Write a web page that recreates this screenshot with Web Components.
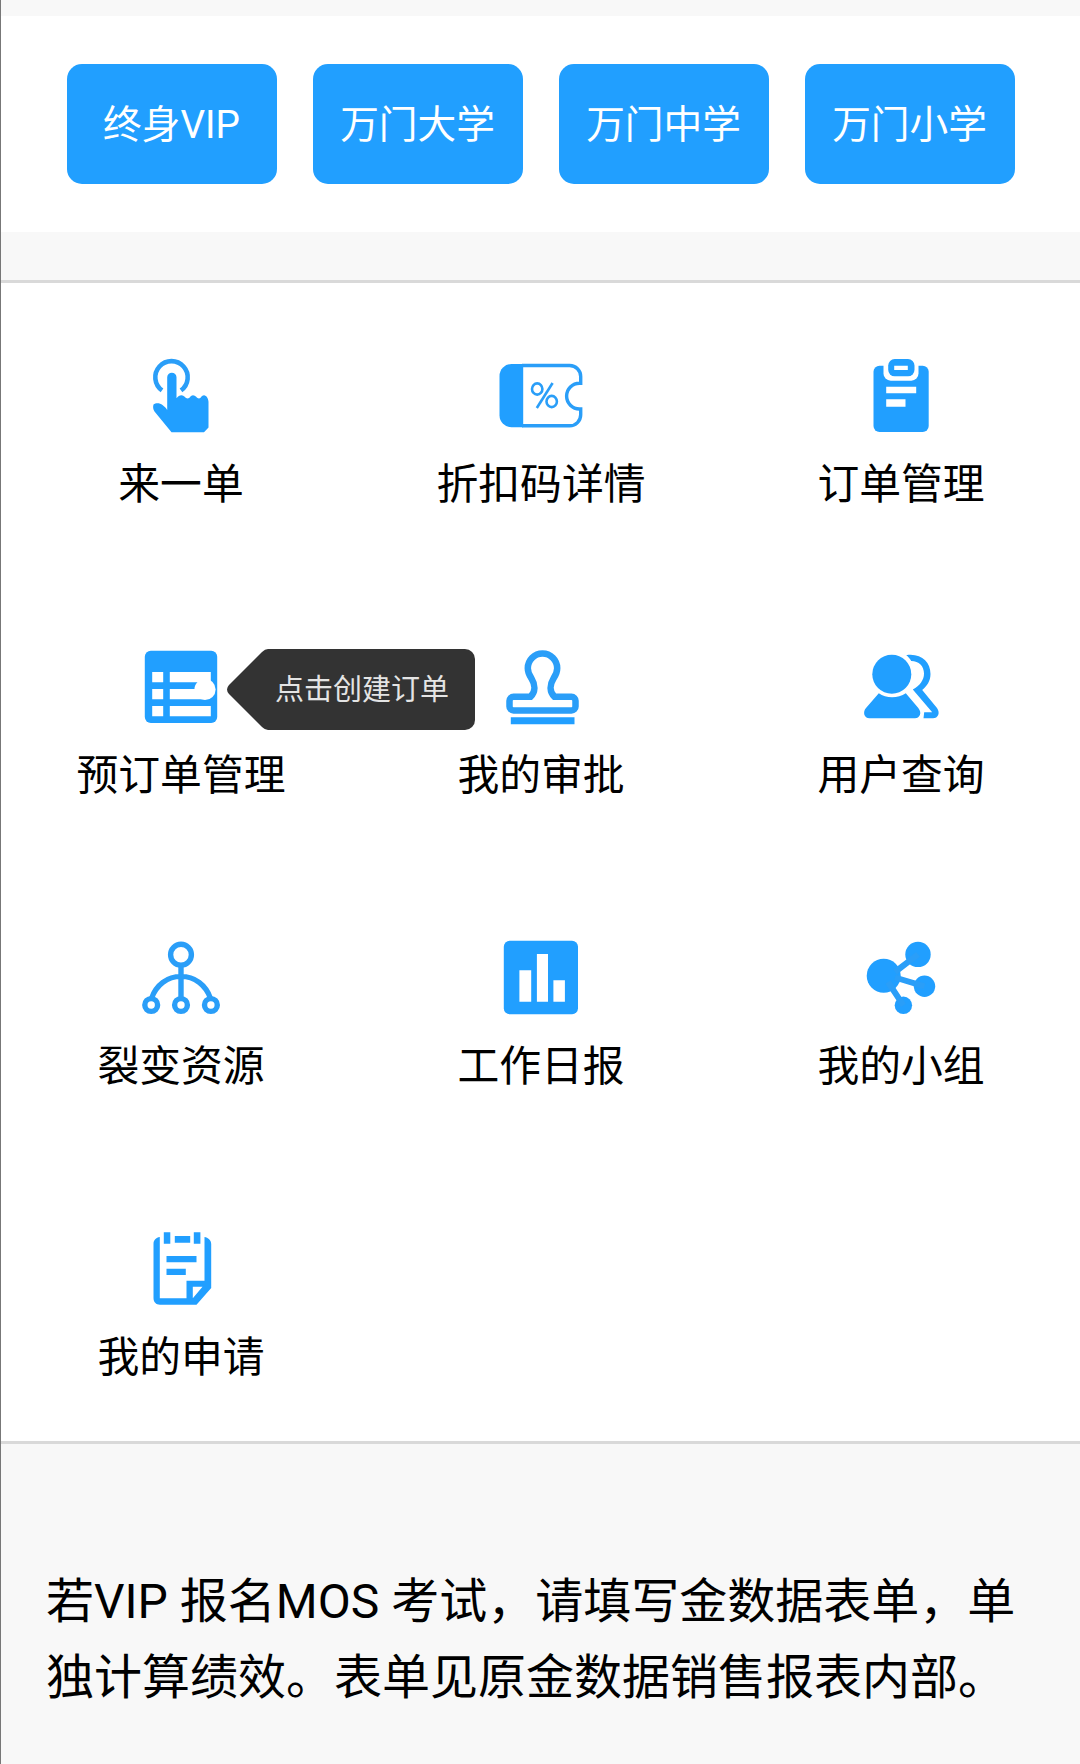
<!DOCTYPE html>
<html lang="zh-CN">
<head>
<meta charset="utf-8">
<title>工作台</title>
<style>
  body {
    margin: 0;
    background: #f8f8f8;
    font-family: Roboto, "Noto Sans CJK SC", sans-serif;
    color: #000;
  }
</style>
</head>
<body>
<work-page>
  <vip-bar slot="top">
    <vip-button>终身VIP</vip-button>
    <vip-button>万门大学</vip-button>
    <vip-button>万门中学</vip-button>
    <vip-button>万门小学</vip-button>
  </vip-bar>
  <menu-grid>
    <menu-item icon="tap">来一单</menu-item>
    <menu-item icon="coupon">折扣码详情</menu-item>
    <menu-item icon="clipboard">订单管理</menu-item>
    <menu-item icon="list">预订单管理<tip-bubble slot="tip">点击创建订单</tip-bubble></menu-item>
    <menu-item icon="stamp">我的审批</menu-item>
    <menu-item icon="users">用户查询</menu-item>
    <menu-item icon="tree">裂变资源</menu-item>
    <menu-item icon="chart">工作日报</menu-item>
    <menu-item icon="share">我的小组</menu-item>
    <menu-item icon="note">我的申请</menu-item>
  </menu-grid>
  <page-note>若VIP 报名MOS 考试，请填写金数据表单，单独计算绩效。表单见原金数据销售报表内部。</page-note>
</work-page>

<script>
const icons = {
  tap: `
    <path class="line" stroke-width="4.6" d="M31 45.400A16.200 16.200 0 1 1 50 45.400"/>
    <path d="M36.200 65V32.300a4.650 4.650 0 0 1 9.300 0V53.200C47 51.500 48.500 50.300 50.500 50.300C53 50.300 54.500 53.500 56.600 53.500C59 53.500 59.500 50.300 62 50.300C64.500 50.300 66 53.500 68 53.500C70 53.500 70.500 50.300 73 50.300C75.500 50.300 77.500 54 77.500 57V82.500L73 87.300H40.500L23.500 66.500C22 64.500 21.800 61.500 22.500 59.500C25 57.500 29 58 31.500 60C33.500 61.500 35 63 36.200 65Z"/>`,
  coupon: `
    <path d="M32.200 19H20.500A12 12 0 0 0 8.500 31V70.300A12 12 0 0 0 20.500 82.300H32.200Z"/>
    <path class="line" stroke-width="3.400" d="M31 20.500H78.700A11 11 0 0 1 89.700 31.500V38.200H88.500A12.800 12.800 0 0 0 88.500 64H89.700V69.800A11 11 0 0 1 78.700 80.800H31"/>
    <g class="line" stroke-width="2.600"><ellipse cx="46.200" cy="44" rx="5.200" ry="5.600"/><ellipse cx="60.700" cy="56.500" rx="5.200" ry="5.600"/><path d="M61.600 38L45.800 63"/></g>`,
  clipboard: `
    <rect x="22.500" y="20.700" width="55.200" height="66.300" rx="6"/>
    <path class="white" d="M32.500 19V28.500A7.200 7.200 0 0 0 39.700 35.700H60.300A7.200 7.200 0 0 0 67.500 28.500V19Z"/>
    <rect x="37.200" y="14" width="26.300" height="17.300" rx="6.500"/>
    <path class="white" d="M43.200 20.700h13.600V25H43.200ZM35.200 41.700h30v6.600h-30ZM35.200 54.300h19.300v7.400H35.200Z"/>`,
  list: `
    <rect x="13.800" y="14.700" width="72.400" height="72.300" rx="6"/>
    <path class="white" d="M21.200 36h11v10.300h-11ZM38.800 36h41v10.300h-41ZM21.200 53h11v10.300h-11ZM38.800 53h35v10.300h-35ZM21.200 70h11v10.300h-11ZM38.800 70h41v10.300h-41Z"/>
    <circle class="white" cx="74" cy="53.500" r="10.600"/>`,
  stamp: `
    <path class="line" stroke-width="6.500" d="M22.500 60.800H39.500C44.500 56 44.500 49 40.500 42.500C38 39 36.800 36 36.800 32.300A14.700 14.700 0 0 1 66.200 32.300C66.200 36 65 39 62.500 42.500C58.500 49 58.500 56 63.500 60.800H80.500A4 4 0 0 1 84.500 64.800V70.400A4 4 0 0 1 80.500 74.400H22.500A4 4 0 0 1 18.500 70.400V64.800A4 4 0 0 1 22.500 60.800Z"/>
    <path d="M19.800 81.300H83.500V88.300H19.800Z"/>`,
  users: `
    <circle cx="40.800" cy="38.300" r="19.500"/>
    <path d="M27.800 57.300C35 62.500 47 62.500 54.800 57.300L67.300 72C71.500 77 68.500 82.300 64 82.300H18.500C13 82.300 11.500 76 15 72Z"/>
    <path d="M55.200 19.200C70 17 79.500 26 79.500 38C79.500 45 76 50 71.200 54L86 72C89.500 77 87 82.300 82 82.300H72.500L73.200 76.300H81.200L61.800 53.500C69 49.500 73 44 73 37.500C73 30 68 25 60.200 24.900C59 22.500 57 20.500 55.200 19.200Z"/>`,
  tree: `
    <g class="line" stroke-width="5.400">
      <circle cx="50" cy="27.700" r="10.400"/>
      <circle cx="20.200" cy="78" r="6.400"/><circle cx="50" cy="78" r="6.400"/><circle cx="79.900" cy="78" r="6.400"/>
      <path d="M50 39V71M20.500 71.500C25 58 36.500 49.400 50 49.400S75 58 79.500 71.500"/>
    </g>`,
  chart: `
    <rect x="12.800" y="13.700" width="74.200" height="73.600" rx="6"/>
    <path class="white" d="M28.400 43.300h11.800v31.400H28.400ZM45.900 27H57v47.700H45.900ZM62.400 53.300h11.500v21.400H62.400Z"/>`,
  share: `
    <circle cx="32.700" cy="48.700" r="17"/><circle cx="67" cy="27.400" r="12.700"/>
    <circle cx="73.500" cy="59.300" r="10.700"/><circle cx="52.400" cy="78.300" r="8.700"/>
    <path class="line" stroke-width="6" d="M67 27.400L44 45M73.500 59.300L44 50.500M52.400 78.300L37 55"/>`,
  note: `
    <path fill-rule="evenodd" d="M28.800 19V80.300H55.500V62.700H73.500V19C77 19.500 80.200 22 80.200 26V70L65.500 86.700H29C25 86.700 22.500 84 22.500 80V26C22.500 22 25 19.500 28.800 19ZM61.800 68.700V80.300L71.500 68.700Z"/>
    <path d="M32.800 14.300h6.500v11.400h-6.500ZM62.800 14.300h6.600v11.400h-6.600ZM43.800 18h15.400v6.700H43.800ZM35.500 38h30v6.300h-30ZM35.500 50.700h19.300V57H35.500Z"/>`
};

class WorkPage extends HTMLElement {
  constructor() {
    super();
    this.attachShadow({mode: 'open'}).innerHTML = `
      <style>
        :host {
          display: flex;
          flex-direction: column;
          box-sizing: border-box;
          min-height: 1764px;
          padding-top: 16px;
          border-left: 1px solid #777;
        }
      </style>
      <slot name="top"></slot>
      <slot></slot>
    `;
  }
}

class VipBar extends HTMLElement {
  constructor() {
    super();
    this.attachShadow({mode: 'open'}).innerHTML = `
      <style>
        :host {
          display: grid;
          grid-template-columns: repeat(4, 210px);
          gap: 36px;
          padding: 48px 65.500px;
          background: #fff;
          margin-bottom: 48px;
        }
      </style>
      <slot></slot>
    `;
  }
}

class VipButton extends HTMLElement {
  constructor() {
    super();
    this.attachShadow({mode: 'open'}).innerHTML = `
      <style>
        :host { display: block; }
        button {
          display: block;
          width: 100%;
          height: 120px;
          padding: 0 0 7px;
          border: 0;
          border-radius: 15px;
          background: #219fff;
          color: #fff;
          font: inherit;
          font-size: 38.700px;
          white-space: nowrap;
        }
      </style>
      <button type="button"><slot></slot></button>
    `;
  }
}

class MenuGrid extends HTMLElement {
  constructor() {
    super();
    this.attachShadow({mode: 'open'}).innerHTML = `
      <style>
        :host {
          display: grid;
          grid-template-columns: repeat(3, 360px);
          grid-auto-rows: 291px;
          height: 1158px;
          background: #fff;
          border-top: 3px solid #d9d9d9;
          border-bottom: 3px solid #d9d9d9;
        }
      </style>
      <slot></slot>
    `;
  }
}

class MenuItem extends HTMLElement {
  connectedCallback() {
    this.attachShadow({mode: 'open'}).innerHTML = `
      <style>
        :host {
          position: relative;
          display: flex;
          flex-direction: column;
          align-items: center;
          box-sizing: border-box;
          padding-top: 62px;
        }
        svg {
          width: 100px;
          height: 100px;
          fill: #219fff;
        }
        .line {
          fill: none;
          stroke: #2a9ef8;
        }
        .white { fill: #fff; }
        .label {
          margin-top: 10px;
          font-size: 41.800px;
          line-height: 60px;
        }
        ::slotted(tip-bubble) {
          position: absolute;
          left: 226px;
          top: 75px;
          z-index: 1;
        }
      </style>
      <svg viewBox="0 0 100 100">${icons[this.getAttribute('icon')]}</svg>
      <div class="label"><slot></slot></div>
      <slot name="tip"></slot>
    `;
  }
}

class TipBubble extends HTMLElement {
  constructor() {
    super();
    this.attachShadow({mode: 'open'}).innerHTML = `
      <style>
        :host {
          display: grid;
          width: 248px;
          height: 81px;
          color: #e4e4e4;
        }
        svg, .text { grid-area: 1 / 1; }
        svg { fill: #333; }
        .text {
          padding-left: 48px;
          font-size: 29px;
          line-height: 82px;
          white-space: nowrap;
        }
      </style>
      <svg width="248" height="81" viewBox="0 0 248 81">
        <path d="M41 0H238A10 10 0 0 1 248 10V71A10 10 0 0 1 238 81H41Q38 81 35 78L2 45Q-2 40.500 2 36L35 3Q38 0 41 0Z"/>
      </svg>
      <div class="text"><slot></slot></div>
    `;
  }
}

class PageNote extends HTMLElement {
  constructor() {
    super();
    this.attachShadow({mode: 'open'}).innerHTML = `
      <style>
        :host {
          display: block;
          padding: 120px 46px 0 45px;
          font-size: 48px;
          line-height: 76px;
        }
      </style>
      <slot></slot>
    `;
  }
}

customElements.define('work-page', WorkPage);
customElements.define('vip-bar', VipBar);
customElements.define('vip-button', VipButton);
customElements.define('menu-grid', MenuGrid);
customElements.define('menu-item', MenuItem);
customElements.define('tip-bubble', TipBubble);
customElements.define('page-note', PageNote);
</script>
</body>
</html>
